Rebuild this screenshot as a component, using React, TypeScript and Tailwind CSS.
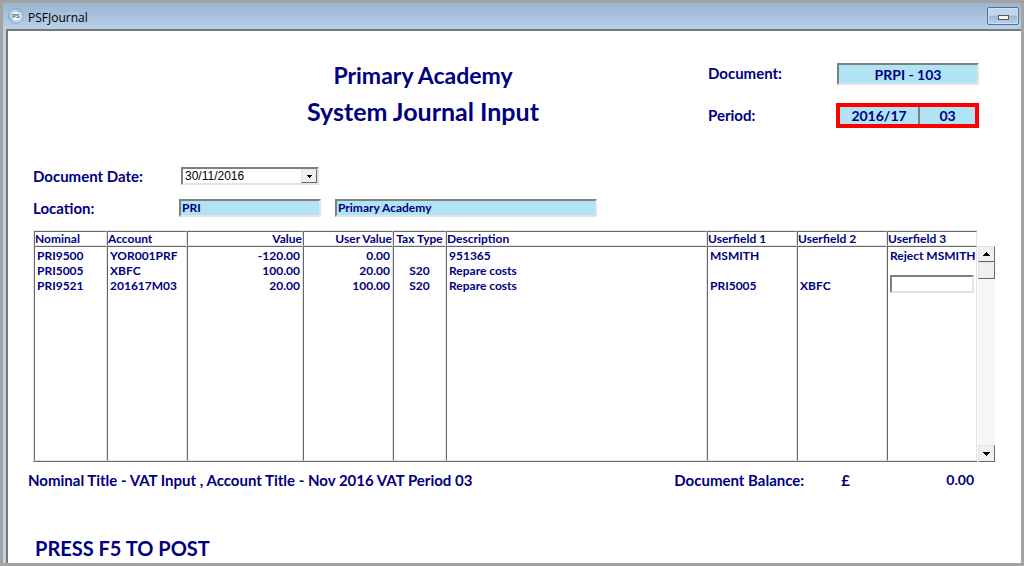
import React, { useState } from 'react';

type Align = 'left' | 'center' | 'right';

interface Column {
  key: keyof JournalLine;
  title: string;
  width: string;
  align: Align;
}

interface JournalLine {
  nominal: string;
  account: string;
  value: string;
  userValue: string;
  taxType: string;
  description: string;
  userfield1: string;
  userfield2: string;
  userfield3: string | null;
}

const columns: Column[] = [
  { key: 'nominal', title: 'Nominal', width: 'w-[73px]', align: 'left' },
  { key: 'account', title: 'Account', width: 'w-[80px]', align: 'left' },
  { key: 'value', title: 'Value', width: 'w-[116px]', align: 'right' },
  { key: 'userValue', title: 'User Value', width: 'w-[90px]', align: 'right' },
  { key: 'taxType', title: 'Tax Type', width: 'w-[53px]', align: 'center' },
  { key: 'description', title: 'Description', width: '', align: 'left' },
  { key: 'userfield1', title: 'Userfield 1', width: 'w-[90px]', align: 'left' },
  { key: 'userfield2', title: 'Userfield 2', width: 'w-[90px]', align: 'left' },
  { key: 'userfield3', title: 'Userfield 3', width: 'w-[90px]', align: 'left' },
];

// userfield3: null means the cell is still open for editing
const lines: JournalLine[] = [
  {
    nominal: 'PRI9500', account: 'YOR001PRF', value: '-120.00', userValue: '0.00', taxType: '',
    description: '951365', userfield1: 'MSMITH', userfield2: '', userfield3: 'Reject MSMITH',
  },
  {
    nominal: 'PRI5005', account: 'XBFC', value: '100.00', userValue: '20.00', taxType: 'S20',
    description: 'Repare costs', userfield1: '', userfield2: '', userfield3: '',
  },
  {
    nominal: 'PRI9521', account: '201617M03', value: '20.00', userValue: '100.00', taxType: 'S20',
    description: 'Repare costs', userfield1: 'PRI5005', userfield2: 'XBFC', userfield3: null,
  },
];

const alignClass: Record<Align, string> = {
  left: 'text-left',
  center: 'text-center',
  right: 'text-right',
};

const sunken = 'border-2 border-t-[#808080] border-l-[#808080] border-r-[#e3e3e3] border-b-[#e3e3e3]';
const raised = 'border border-t-[#e3e3e3] border-l-[#e3e3e3] border-r-[#696969] border-b-[#696969] bg-[#f0f0f0]';

function TitleBar() {
  return (
    <header className="flex h-[26px] items-center justify-between bg-linear-to-b from-[#9ab4d2] to-[#b9d1ea] pl-[5px] pr-0.5">
      <div className="flex items-center gap-1">
        <svg className="h-4 w-4" viewBox="0 0 16 16">
          <defs>
            <linearGradient id="disc" x1="0" y1="0" x2="1" y2="1">
              <stop offset="0" stopColor="#c4ecf4" />
              <stop offset="0.45" stopColor="#8fc3dc" />
              <stop offset="0.6" stopColor="#d5c8e6" />
              <stop offset="1" stopColor="#a8e0e8" />
            </linearGradient>
          </defs>
          <circle cx="8" cy="8" r="7.5" fill="url(#disc)" stroke="#7da3b8" strokeWidth="0.8" />
          <circle cx="8" cy="8" r="4.6" fill="#eef6f8" />
          <text x="8" y="10" textAnchor="middle" fontSize="5.5" fontWeight="700" fontFamily="Liberation Sans" fill="#4b5563">PS</text>
        </svg>
        <h1 className="mt-1 font-['Open_Sans',sans-serif] text-xs font-normal text-black">PSFJournal</h1>
      </div>
      <button
        type="button"
        aria-label="Minimise"
        className="flex h-[18px] w-8 items-center justify-center rounded-[2px] border border-[#5a6f8f] bg-linear-to-b from-[#c3d7ec] from-45% via-[#9db8d5] via-50% to-[#b9d3ec] shadow-[inset_0_0_0_1px_#cfe0f1]"
      >
        <span className="mt-0.5 h-[5px] w-[11px] border border-[#535666] bg-[#f4f4ee]" />
      </button>
    </header>
  );
}

function Arrow({ up = false }: { up?: boolean }) {
  return (
    <svg className="h-1 w-[7px]" viewBox="0 0 7 4" shapeRendering="crispEdges">
      <path d={up ? 'M3 0h1v1h1v1h1v1h1v1H0V3h1V2h1V1h1z' : 'M0 0h7v1H6v1H5v1H4v1H3V3H2V2H1V1H0z'} fill="#000" />
    </svg>
  );
}

function JournalTable() {
  const [userfield, setUserfield] = useState('');

  return (
    <table className="w-full min-w-0 flex-1 table-fixed border-separate border-spacing-0 border-t border-b border-l border-t-[#e3e3e3] border-b-[#696969] border-l-[#e3e3e3] text-[12px] leading-[15px]">
      <thead>
        <tr>
          {columns.map((column) => (
            <th
              key={column.key}
              className={`h-[15px] border-t border-r border-b border-l border-t-[#696969] border-r-[#e3e3e3] border-b-[#e3e3e3] border-l-[#696969] pt-px pb-0 leading-3 font-bold whitespace-nowrap ${column.width} ${alignClass[column.align]}`}
            >
              {column.title}
            </th>
          ))}
        </tr>
      </thead>
      <tbody>
        {lines.map((line, index) => (
          <tr key={line.nominal}>
            {columns.map((column) => (
              <td
                key={column.key}
                className={`border-r border-l border-r-[#e3e3e3] border-l-[#696969] px-0.5 whitespace-nowrap ${index === 0 ? 'border-t border-t-[#696969] pt-px' : ''} ${alignClass[column.align]}`}
              >
                {line[column.key] === null ? (
                  <input
                    aria-label={`${column.title} ${line.nominal}`}
                    value={userfield}
                    onChange={(e) => setUserfield(e.target.value)}
                    className={`-mt-[3px] block h-[18px] w-full bg-white px-0.5 outline-none ${sunken}`}
                  />
                ) : (
                  line[column.key]
                )}
              </td>
            ))}
          </tr>
        ))}
        <tr>
          {columns.map((column) => (
            <td key={column.key} className="h-[168px] border-r border-b border-l border-r-[#e3e3e3] border-b-[#e3e3e3] border-l-[#696969]" />
          ))}
        </tr>
      </tbody>
    </table>
  );
}

function ScrollBar() {
  return (
    <div className="mt-4 ml-px flex w-[17px] flex-none flex-col bg-[#f6f6f6]">
      <button type="button" aria-label="Scroll up" className={`flex h-4 items-center justify-center ${raised}`}>
        <Arrow up />
      </button>
      <div className={`h-[17px] ${raised}`} />
      <div className="flex-1" />
      <button type="button" aria-label="Scroll down" className={`flex h-[17px] items-center justify-center ${raised}`}>
        <Arrow />
      </button>
    </div>
  );
}

export default function App() {
  const [date, setDate] = useState('30/11/2016');

  return (
    <div className="flex min-h-screen flex-col border-3 border-[#a3a3a3] bg-[#b9d1ea] font-['Lato',sans-serif] font-bold text-[#000080]">
      <TitleBar />
      <main className="ml-[3px] flex-1 border-t-2 border-l-2 border-t-[#787878] border-l-[#787878] bg-white pl-[25px]">
        <section className="flex pt-8 pr-[42px]">
          <div className="flex-1 pl-[105px] text-center">
            <h2 className="text-[23px] leading-6">Primary Academy</h2>
            <h2 className="mt-2 text-[25px] leading-8">System Journal Input</h2>
          </div>
          <div className="flex w-[271px] flex-col text-[14px]">
            <div className="flex items-start justify-between">
              <label htmlFor="document" className="text-[15px] leading-5">Document:</label>
              <input id="document" readOnly value="PRPI - 103" className={`h-[22px] w-[142px] bg-[#b0e4f5] text-center outline-none ${sunken}`} />
            </div>
            <div className="mt-[18px] flex items-start justify-between">
              <label htmlFor="period-year" className="text-[15px] leading-6">Period:</label>
              <div className="flex h-[25px] w-[143px] border-4 border-[#ff0000] bg-[#b0e4f5]">
                <input id="period-year" readOnly value="2016/17" className="w-20 border-r-2 border-[#808080] text-center outline-none" />
                <input aria-label="Period number" readOnly value="03" className="min-w-0 flex-1 text-center outline-none" />
              </div>
            </div>
          </div>
        </section>

        <section className="mt-[38px]">
          <div className="flex items-center">
            <label htmlFor="document-date" className="w-[148px] text-[15px] leading-5">Document Date:</label>
            <div className="relative h-[18px] w-[138px]">
              <select
                id="document-date"
                value={date}
                onChange={(e) => setDate(e.target.value)}
                className={`block h-full w-full appearance-none bg-white pl-0.5 font-['Liberation_Sans',sans-serif] text-[12px] leading-[14px] font-normal text-black outline-none ${sunken}`}
              >
                <option>30/11/2016</option>
              </select>
              <span className={`pointer-events-none absolute top-0.5 right-0.5 flex h-3.5 w-4 items-center justify-center ${raised}`}>
                <svg className="h-[3px] w-[5px]" viewBox="0 0 5 3" shapeRendering="crispEdges">
                  <path d="M0 0h5v1H4v1H3v1H2V2H1V1H0z" fill="#000" />
                </svg>
              </span>
            </div>
          </div>
          <div className="mt-3 flex items-center">
            <label htmlFor="location" className="w-[146px] text-[15px] leading-5">Location:</label>
            <input id="location" readOnly value="PRI" className={`h-[18px] w-[142px] bg-[#b0e4f5] px-px text-[12px] outline-none ${sunken}`} />
            <input aria-label="Location name" readOnly value="Primary Academy" className={`ml-3.5 h-[18px] w-[262px] bg-[#b0e4f5] px-px text-[12px] outline-none ${sunken}`} />
          </div>
        </section>

        <section className="mt-3 mr-[26px] flex">
          <JournalTable />
          <ScrollBar />
        </section>

        <section className="mt-2 -ml-[5px] flex items-center pr-[47px] text-[15px] leading-5">
          <p className="flex-1">Nominal Title - VAT Input , Account Title - Nov 2016 VAT Period 03</p>
          <p className="w-[167px]">Document Balance:</p>
          <p>£</p>
          <p className="w-[124px] text-right text-[14px]">0.00</p>
        </section>

        <p className="mt-[46px] pl-0.5 text-[20px] leading-6">PRESS F5 TO POST</p>
      </main>
    </div>
  );
}
